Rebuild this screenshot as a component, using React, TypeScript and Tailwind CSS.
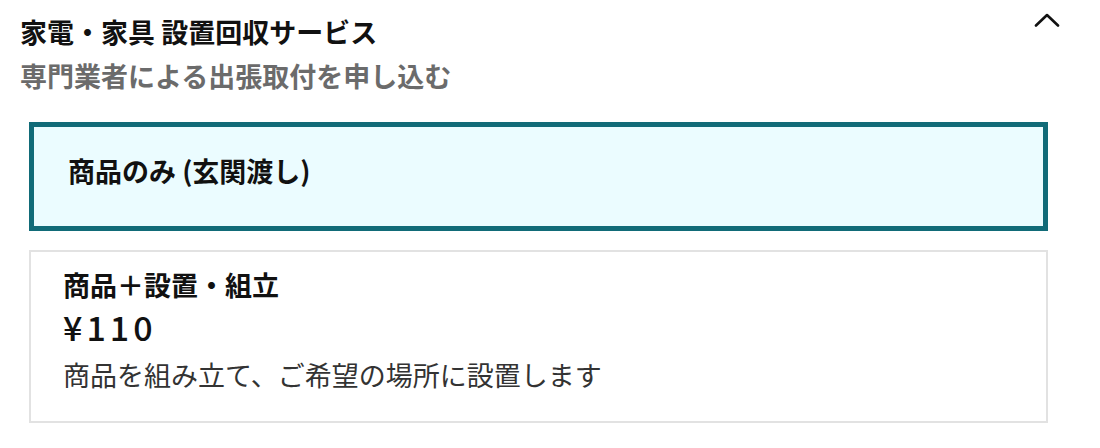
import React from "react";

const font = { fontFamily: '"Noto Sans CJK JP", "Noto Sans", sans-serif' };

function ChevronUp() {
  return (
    <svg width="26" height="14" viewBox="0 0 26 14" fill="none" className="block">
      <path d="M2 12.5 L13 2 L24 12.5" stroke="#111" strokeWidth="2.6" strokeLinecap="round" strokeLinejoin="round" />
    </svg>
  );
}

export default function App() {
  return (
    <div className="w-[1100px] h-[448px] bg-white overflow-hidden" style={font}>
      <div className="pl-[20px] pr-[40px] pt-[10px] flex items-start justify-between">
        <div>
          <h2 className="text-[27px] leading-[44px] font-bold text-[#111]">家電・家具 設置回収サービス</h2>
          <p className="text-[27px] leading-[44px] font-bold text-[#6b6b6b]">専門業者による出張取付を申し込む</p>
        </div>
        <div className="pt-[3px]">
          <ChevronUp />
        </div>
      </div>

      <div className="ml-[29px] w-[1019px] mt-[24px] flex flex-col gap-[19px]">
        <button
          type="button"
          className="h-[109px] border-[5px] border-[#116b78] bg-[#ebfcff] text-left pl-[34px] flex items-center"
        >
          <span className="text-[27px] font-bold text-[#111] pb-[10px]">商品のみ (玄関渡し)</span>
        </button>

        <button
          type="button"
          className="h-[173px] border-[2px] border-[#e2e2e2] bg-white text-left pl-[32px] pt-[13px] flex flex-col"
        >
          <span className="text-[27px] leading-[40px] font-bold text-[#111]">商品＋設置・組立</span>
          <span className="text-[34px] leading-[44px] font-medium text-[#111] tracking-[4px]">¥110</span>
          <span className="text-[27px] leading-[52px] text-[#333]">商品を組み立て、ご希望の場所に設置します</span>
        </button>
      </div>
    </div>
  );
}
